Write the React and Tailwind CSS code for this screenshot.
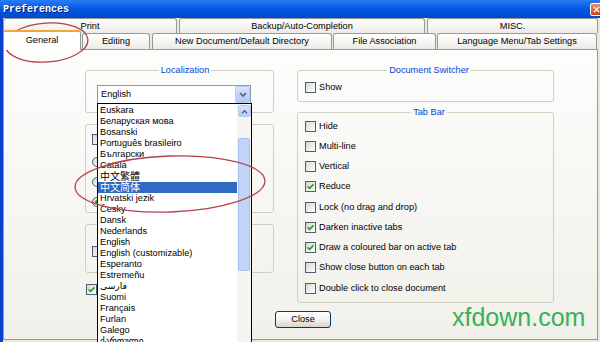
import React from "react";

const langs = [
  "Euskara",
  "Беларуская мова",
  "Bosanski",
  "Português brasileiro",
  "Български",
  "Català",
  "中文繁體",
  "中文简体",
  "Hrvatski jezik",
  "Česky",
  "Dansk",
  "Nederlands",
  "English",
  "English (customizable)",
  "Esperanto",
  "Estremeñu",
  "فارسی",
  "Suomi",
  "Français",
  "Furlan",
  "Galego",
  "ქართული",
];

const tabBarOptions = [
  ["Hide", false],
  ["Multi-line", false],
  ["Vertical", false],
  ["Reduce", true],
  ["Lock (no drag and drop)", false],
  ["Darken inactive tabs", true],
  ["Draw a coloured bar on active tab", true],
  ["Show close button on each tab", false],
  ["Double click to close document", false],
];

function Check({ checked }) {
  return (
    <span className="w-[11px] h-[11px] shrink-0 border border-[#4c5d74] bg-gradient-to-br from-[#d8d8d2] to-white flex items-center justify-center">
      {checked && (
        <svg viewBox="0 0 7 7" className="w-[7px] h-[7px]">
          <path d="M0.6 3.4 L2.6 5.4 L6.4 1.4" stroke="#21a121" strokeWidth="1.7" fill="none" />
        </svg>
      )}
    </span>
  );
}

function Radio({ on }) {
  return (
    <span className="w-[10px] h-[10px] rounded-full border border-[#4c5d74] bg-gradient-to-br from-[#d8d8d2] to-white flex items-center justify-center">
      {on && <span className="w-[4px] h-[4px] rounded-full bg-[#21a121]" />}
    </span>
  );
}

function Tab({ label, className }) {
  return (
    <div
      className={`flex items-center justify-center border border-b-0 border-[#919b9c] rounded-t-[3px] bg-gradient-to-b from-white to-[#ecebe6] ${className}`}
    >
      {label}
    </div>
  );
}

export default function App() {
  return (
    <div className="relative w-[600px] h-[342px] overflow-hidden bg-[#ece9d8] text-[9.2px] leading-[11px] text-black font-['Liberation_Sans','DejaVu_Sans','Noto_Sans_CJK_SC',sans-serif]">
      {/* title bar */}
      <div className="h-[18px] flex items-center justify-between pl-[3px] bg-gradient-to-b from-[#2b7cf5] via-[#0058e6] to-[#0049cc]">
        <span className="font-['Liberation_Mono',monospace] font-bold text-[10px] text-white [text-shadow:1px_1px_#0a246a]">
          Preferences
        </span>
        <span className="w-[13px] h-[13px] mr-[-3px] rounded-[2px] border border-white bg-gradient-to-b from-[#e98a6c] to-[#c8401f] flex items-center justify-center">
          <svg viewBox="0 0 8 8" className="w-[7px] h-[7px]">
            <path d="M1 1 L7 7 M7 1 L1 7" stroke="white" strokeWidth="1.6" />
          </svg>
        </span>
      </div>

      <div className="flex h-[324px]">
        <div className="w-[3px] bg-[#0a3fd0]" />
        <div className="flex-1 flex flex-col">
          {/* tab rows */}
          <div className="flex h-[15px] gap-[2px]">
            <Tab label="Print" className="w-[174px]" />
            <Tab label="Backup/Auto-Completion" className="w-[246px]" />
            <Tab label="MISC." className="w-[171px]" />
          </div>
          <div className="flex items-end h-[16px]">
            <div className="relative z-10 w-[78px] h-[20px] mb-[-1px] flex items-center justify-center bg-white border border-b-0 border-[#919b9c] border-t-[2px] border-t-[#f0a53a] rounded-t-[3px] pb-[1px]">
              General
            </div>
            <Tab label="Editing" className="w-[68px] h-[16px] ml-[1px]" />
            <Tab label="New Document/Default Directory" className="w-[180px] h-[16px] ml-[2px]" />
            <Tab label="File Association" className="w-[103px] h-[16px] ml-[1px]" />
            <Tab label="Language Menu/Tab Settings" className="w-[160px] h-[16px] ml-[1px]" />
          </div>

          {/* panel */}
          <div className="w-[595px] h-[291px] border border-[#919b9c] bg-gradient-to-b from-[#fdfdfc] to-[#f1f0ea] pt-[15px] pl-[81px]">
            <div className="flex gap-[23px] items-start">
              {/* left column */}
              <div className="w-[189px] flex flex-col">
                <fieldset className="h-[48px] border border-[#d0d0bf] rounded-[3px] pl-[11px]">
                  <legend className="mx-auto px-[2px] text-[#0046d5]">Localization</legend>
                  <div className="mt-[9px] w-[154px] h-[19px] border border-[#7f9db9] bg-white flex items-center justify-between">
                    <span className="pl-[3px]">English</span>
                    <span className="w-[15px] h-[17px] rounded-[2px] border border-[#b9cbf3] bg-gradient-to-b from-[#d7e2fd] to-[#b2c7f5] flex items-center justify-center">
                      <svg viewBox="0 0 8 6" className="w-[8px] h-[6px]">
                        <path d="M1 1 L4 4 L7 1" stroke="#4d6185" strokeWidth="1.6" fill="none" />
                      </svg>
                    </span>
                  </div>
                </fieldset>
                <div className="mt-[11px] h-[89px] border border-[#d0d0bf] rounded-[3px] pl-[6px] pt-[9px] flex flex-col gap-[10px]">
                  <Check />
                  <div className="flex flex-col gap-[10px] mt-[2px]">
                    <Radio />
                    <Radio />
                    <Radio on />
                  </div>
                </div>
                <div className="mt-[11px] h-[49px] border border-[#d0d0bf] rounded-[3px] pl-[6px] pt-[21px]">
                  <Check />
                </div>
                <div className="mt-[11px] pl-[1px]">
                  <Check checked />
                </div>
              </div>

              {/* right column */}
              <div className="w-[257px] flex flex-col">
                <fieldset className="h-[37px] border border-[#d0d0bf] rounded-[3px] pl-[7px]">
                  <legend className="mx-auto px-[2px] text-[#0046d5]">Document Switcher</legend>
                  <label className="mt-[6px] flex items-center gap-[3px]">
                    <Check />
                    Show
                  </label>
                </fieldset>
                <fieldset className="mt-[5px] h-[196px] border border-[#d0d0bf] rounded-[3px] pl-[7px]">
                  <legend className="mx-auto px-[2px] text-[#0046d5]">Tab Bar</legend>
                  <div className="-mt-[2px] flex flex-col">
                    {tabBarOptions.map(([label, on]) => (
                      <label key={label} className="h-[20.25px] flex items-center gap-[3px]">
                        <Check checked={on} />
                        {label}
                      </label>
                    ))}
                  </div>
                </fieldset>
              </div>
            </div>
            <div className="mt-[8px] pl-[190px]">
              <button
                type="button"
                className="w-[56px] h-[17px] border border-[#003c74] rounded-[3px] bg-gradient-to-b from-white via-[#f3f2ee] to-[#d9d4c9] flex items-center justify-center"
              >
                Close
              </button>
            </div>
          </div>
        </div>
      </div>

      {/* open combo dropdown */}
      <div className="absolute left-[97px] top-[103px] w-[155px] h-[245px] border border-black bg-white flex">
        <div className="flex-1 flex flex-col pt-[1px]">
          {langs.map((l) => (
            <div
              key={l}
              className={`h-[11px] pl-[2px] whitespace-nowrap ${
                /[\u4e00-\u9fff]/.test(l) ? "text-[10px]" : ""
              } ${l === "中文简体" ? "bg-[#316ac5] text-white" : ""}`}
            >
              {l}
            </div>
          ))}
        </div>
        <div className="w-[14px] bg-[#f6f5f1] flex flex-col items-center pt-[1px]">
          <span className="w-[13px] h-[12px] rounded-[2px] border border-[#b9cbf3] bg-gradient-to-b from-[#d7e2fc] to-[#b8cbf6] flex items-center justify-center">
            <svg viewBox="0 0 8 6" className="w-[7px] h-[5px]">
              <path d="M1 5 L4 2 L7 5" stroke="#4d6185" strokeWidth="1.6" fill="none" />
            </svg>
          </span>
          <span className="mt-[21px] w-[12px] h-[133px] rounded-[2px] border border-[#a9bff0] bg-[#c3d4fb]" />
        </div>
      </div>

      {/* watermark */}
      <div className="absolute left-[452px] top-[305px] text-[25px] leading-none text-[#36b25a] font-['Liberation_Sans',sans-serif]">
        xfdown.com
      </div>

      {/* red annotation marks */}
      <svg className="absolute inset-0 pointer-events-none" width="600" height="342">
        <ellipse cx="46.5" cy="42.5" rx="41.5" ry="19.5" fill="none" stroke="#b5404c" strokeWidth="1.3" transform="rotate(-4 46.5 42.5)" />
        <ellipse cx="170" cy="184" rx="95" ry="28" fill="none" stroke="#b5404c" strokeWidth="1.3" transform="rotate(-2 170 184)" />
      </svg>
    </div>
  );
}
